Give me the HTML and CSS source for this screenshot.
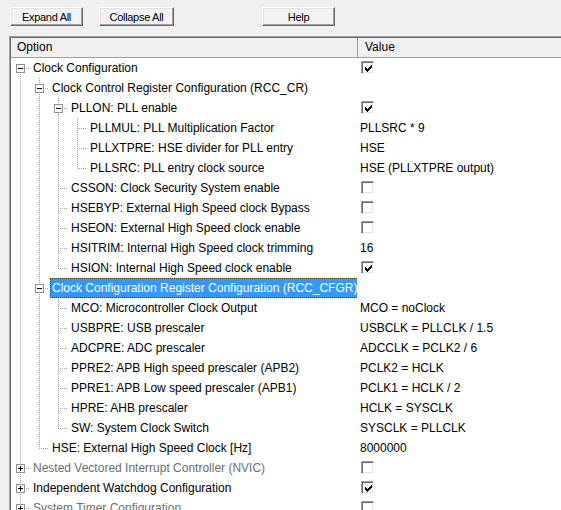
FILE: index.html
```html
<!DOCTYPE html>
<html>
<head>
<meta charset="utf-8">
<link rel="stylesheet" href="styles.css">
</head>
<body>
<div class="toolbar">
  <button class="btn">Expand All</button>
  <button class="btn btn-collapse">Collapse All</button>
  <button class="btn btn-help">Help</button>
</div>
<div class="tree">
 <div class="tree-in">
  <div class="hdr"><div class="hc1">Option</div><div class="hc2">Value</div></div>

  <div class="row"><div class="name"><span class="g f"><span class="box minus"></span></span><span class="lbl">Clock Configuration</span></div><div class="val"><span class="cb on"><svg width="7" height="7" viewBox="0 0 7 7"><path d="M0 2h1v1h1v1h1V3h1V2h1V1h1V0h1v3H6v1H5v1H4v1H3v1H2V6H1V5H0z"/></svg></span></div></div>

  <div class="row"><div class="name"><span class="g p"></span><span class="g t"><span class="box minus"></span></span><span class="lbl">Clock Control Register Configuration (RCC_CR)</span></div><div class="val"></div></div>

  <div class="row"><div class="name"><span class="g p"></span><span class="g p"></span><span class="g t"><span class="box minus"></span></span><span class="lbl">PLLON: PLL enable</span></div><div class="val"><span class="cb on"><svg width="7" height="7" viewBox="0 0 7 7"><path d="M0 2h1v1h1v1h1V3h1V2h1V1h1V0h1v3H6v1H5v1H4v1H3v1H2V6H1V5H0z"/></svg></span></div></div>

  <div class="row"><div class="name"><span class="g p"></span><span class="g p"></span><span class="g p"></span><span class="g t"></span><span class="lbl">PLLMUL: PLL Multiplication Factor</span></div><div class="val">PLLSRC * 9</div></div>

  <div class="row"><div class="name"><span class="g p"></span><span class="g p"></span><span class="g p"></span><span class="g t"></span><span class="lbl">PLLXTPRE: HSE divider for PLL entry</span></div><div class="val">HSE</div></div>

  <div class="row"><div class="name"><span class="g p"></span><span class="g p"></span><span class="g p"></span><span class="g e"></span><span class="lbl">PLLSRC: PLL entry clock source</span></div><div class="val">HSE (PLLXTPRE output)</div></div>

  <div class="row"><div class="name"><span class="g p"></span><span class="g p"></span><span class="g t"></span><span class="lbl">CSSON: Clock Security System enable</span></div><div class="val"><span class="cb"></span></div></div>

  <div class="row"><div class="name"><span class="g p"></span><span class="g p"></span><span class="g t"></span><span class="lbl">HSEBYP: External High Speed clock Bypass</span></div><div class="val"><span class="cb"></span></div></div>

  <div class="row"><div class="name"><span class="g p"></span><span class="g p"></span><span class="g t"></span><span class="lbl">HSEON: External High Speed clock enable</span></div><div class="val"><span class="cb"></span></div></div>

  <div class="row"><div class="name"><span class="g p"></span><span class="g p"></span><span class="g t"></span><span class="lbl">HSITRIM: Internal High Speed clock trimming</span></div><div class="val">16</div></div>

  <div class="row"><div class="name"><span class="g p"></span><span class="g p"></span><span class="g e"></span><span class="lbl">HSION: Internal High Speed clock enable</span></div><div class="val"><span class="cb on"><svg width="7" height="7" viewBox="0 0 7 7"><path d="M0 2h1v1h1v1h1V3h1V2h1V1h1V0h1v3H6v1H5v1H4v1H3v1H2V6H1V5H0z"/></svg></span></div></div>

  <div class="row"><div class="name"><span class="g p"></span><span class="g t"><span class="box minus"></span></span><span class="lbl sel">Clock Configuration Register Configuration (RCC_CFGR)</span></div><div class="val"></div></div>

  <div class="row"><div class="name"><span class="g p"></span><span class="g p"></span><span class="g t"></span><span class="lbl">MCO: Microcontroller Clock Output</span></div><div class="val">MCO = noClock</div></div>

  <div class="row"><div class="name"><span class="g p"></span><span class="g p"></span><span class="g t"></span><span class="lbl">USBPRE: USB prescaler</span></div><div class="val">USBCLK = PLLCLK / 1.5</div></div>

  <div class="row"><div class="name"><span class="g p"></span><span class="g p"></span><span class="g t"></span><span class="lbl">ADCPRE: ADC prescaler</span></div><div class="val">ADCCLK = PCLK2 / 6</div></div>

  <div class="row"><div class="name"><span class="g p"></span><span class="g p"></span><span class="g t"></span><span class="lbl">PPRE2: APB High speed prescaler (APB2)</span></div><div class="val">PCLK2 = HCLK</div></div>

  <div class="row"><div class="name"><span class="g p"></span><span class="g p"></span><span class="g t"></span><span class="lbl">PPRE1: APB Low speed prescaler (APB1)</span></div><div class="val">PCLK1 = HCLK / 2</div></div>

  <div class="row"><div class="name"><span class="g p"></span><span class="g p"></span><span class="g t"></span><span class="lbl">HPRE: AHB prescaler</span></div><div class="val">HCLK = SYSCLK</div></div>

  <div class="row"><div class="name"><span class="g p"></span><span class="g p"></span><span class="g e"></span><span class="lbl">SW: System Clock Switch</span></div><div class="val">SYSCLK = PLLCLK</div></div>

  <div class="row"><div class="name"><span class="g p"></span><span class="g e"></span><span class="lbl">HSE: External High Speed Clock [Hz]</span></div><div class="val">8000000</div></div>

  <div class="row"><div class="name"><span class="g t"><span class="box plus"></span></span><span class="lbl dim">Nested Vectored Interrupt Controller (NVIC)</span></div><div class="val"><span class="cb"></span></div></div>

  <div class="row"><div class="name"><span class="g t"><span class="box plus"></span></span><span class="lbl">Independent Watchdog Configuration</span></div><div class="val"><span class="cb on"><svg width="7" height="7" viewBox="0 0 7 7"><path d="M0 2h1v1h1v1h1V3h1V2h1V1h1V0h1v3H6v1H5v1H4v1H3v1H2V6H1V5H0z"/></svg></span></div></div>

  <div class="row"><div class="name"><span class="g t"><span class="box plus"></span></span><span class="lbl dim">System Timer Configuration</span></div><div class="val"><span class="cb"></span></div></div>
 </div>
</div>
</body>
</html>
```
FILE: styles.css
```css
html, body {
  margin: 0;
  padding: 0;
  background: #f0f0f0;
  overflow: hidden;
  height: 510px;
}
body {
  font-family: "Liberation Sans", Arial, sans-serif;
  font-size: 12px;
  color: #000;
}
.toolbar {
  display: flex;
  padding: 7px 0 0 10px;
  height: 19px;
}
.btn {
  box-sizing: border-box;
  width: 73px;
  height: 19px;
  margin: 0;
  padding: 0;
  font-family: "Liberation Sans", Arial, sans-serif;
  font-size: 11px;
  letter-spacing: -0.3px;
  color: #000;
  background: #f2f2f2;
  border: 1px solid;
  border-color: #fff #696969 #696969 #fff;
  box-shadow: inset -1px -1px 0 #a0a0a0, inset 1px 1px 0 #e3e3e3;
}
.btn-collapse {
  width: 75px;
  margin-left: 16px;
}
.btn-help {
  margin-left: 88px;
}
.tree {
  margin: 10px 0 0 9px;
  width: 620px;
  border-top: 1px solid #a0a0a0;
  border-left: 1px solid #a0a0a0;
}
.tree-in {
  border-top: 1px solid #696969;
  border-left: 1px solid #696969;
  background: #fff;
  height: 600px;
}
.hdr {
  display: flex;
  height: 19px;
  line-height: 19px;
  background: #f0f0f0;
  border-bottom: 1px solid #a0a0a0;
}
.hc1 {
  box-sizing: border-box;
  width: 347px;
  padding-left: 6px;
  border-right: 1px solid #a0a0a0;
}
.hc2 {
  padding-left: 7px;
}
.row {
  display: flex;
  height: 20px;
}
.name {
  display: flex;
  width: 346px;
  flex: none;
  overflow: hidden;
}
.val {
  display: flex;
  align-items: flex-start;
  padding-left: 3px;
  line-height: 20px;
  white-space: nowrap;
}
.g {
  position: relative;
  flex: none;
  width: 19px;
  height: 20px;
}
.g::before, .g::after {
  content: "";
  position: absolute;
}
.g.p::before, .g.t::before, .g.e::before, .g.f::before {
  left: 9px;
  width: 1px;
  background: repeating-linear-gradient(to bottom, #a0a0a0 0 1px, transparent 1px 2px);
}
.g.p::before, .g.t::before { top: 0; height: 20px; }
.g.e::before { top: 0; height: 11px; }
.g.f::before { top: 10px; height: 10px; }
.g.t::after, .g.e::after, .g.f::after {
  left: 10px;
  top: 10px;
  width: 9px;
  height: 1px;
  background: repeating-linear-gradient(to right, transparent 0 1px, #a0a0a0 1px 2px);
}
.box {
  position: absolute;
  z-index: 1;
  left: 5px;
  top: 6px;
  width: 9px;
  height: 9px;
  box-sizing: border-box;
  border: 1px solid #919191;
  background: #fff;
}
.box::before, .box::after {
  content: "";
  position: absolute;
  background: #000;
}
.box::before {
  left: 1px;
  top: 3px;
  width: 5px;
  height: 1px;
}
.box.plus::after {
  left: 3px;
  top: 1px;
  width: 1px;
  height: 5px;
}
.box.minus::after { display: none; }
.lbl {
  margin-left: 1px;
  padding: 0 2px;
  height: 20px;
  line-height: 20px;
  white-space: nowrap;
  box-sizing: border-box;
}
.lbl.sel {
  background: #3399ff;
  color: #fff;
  outline: 1px dotted #5a3a10;
  outline-offset: -1px;
}
.lbl.dim {
  color: #6d6d6d;
}
.cb {
  box-sizing: border-box;
  width: 13px;
  height: 13px;
  margin: 3px 0 0 1px;
  border: 1px solid;
  border-color: #a0a0a0 #fff #fff #a0a0a0;
  box-shadow: inset 1px 1px 0 #696969, inset -1px -1px 0 #e3e3e3;
  background: #fff;
  display: flex;
  align-items: center;
  justify-content: center;
}
.cb svg {
  display: block;
  fill: #000;
  margin: 1px 0 0 1px;
}
```
